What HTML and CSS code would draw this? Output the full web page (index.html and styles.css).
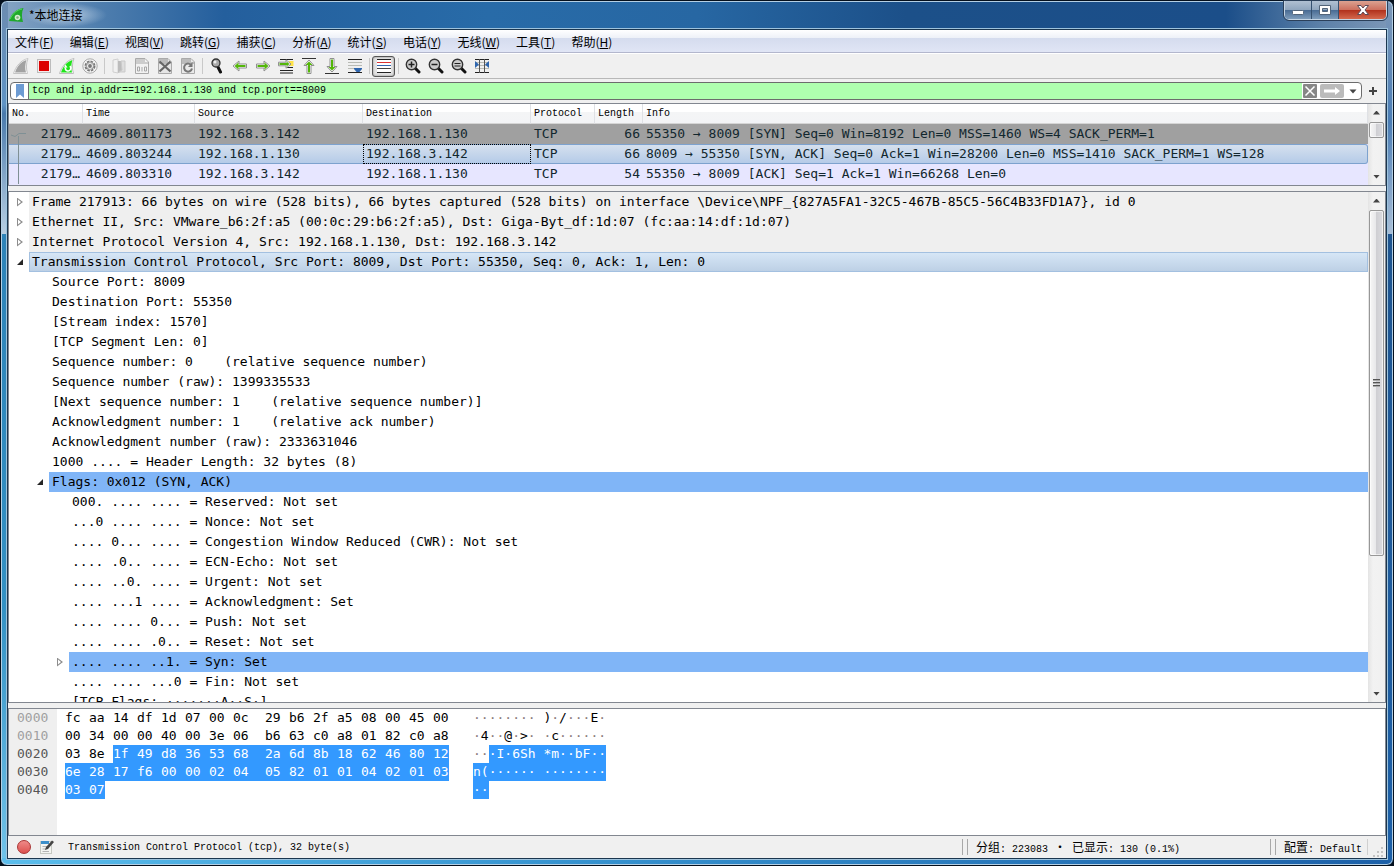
FILE: index.html
```html
<!DOCTYPE html>
<html lang="zh-CN">
<head>
<meta charset="utf-8">
<title>*本地连接</title>
<link rel="stylesheet" href="styles.css">
</head>
<body>
<div class="window">
  <header class="titlebar">
    <svg class="app-icon" width="16" height="16" viewBox="0 0 16 16"><path d="M1 14C3 7 8 2 15.500 1 13.500 5 13.500 10 15 15L1 14Z" fill="#1fa82c"/><path d="M2 12C5 6 9 3 14 2" stroke="#58d862" fill="none"/><circle cx="9.500" cy="10.500" r="2.800" fill="#d5ecd0"/><circle cx="9.500" cy="10.500" r="1.200" fill="#7fae7c"/></svg>
    <h1 class="title">*本地连接</h1>
    <div class="window-buttons">
      <button class="wbtn" aria-label="最小化"><svg width="14" height="12" viewBox="0 0 14 12"><rect x="1.500" y="6.500" width="11" height="4" rx="1" fill="#fff" stroke="#53657a"/></svg></button>
      <button class="wbtn" aria-label="最大化"><svg width="14" height="12" viewBox="0 0 14 12"><path d="M1.500 1.500H12.500V10.500H1.500ZM4.500 4.500V7.500H9.500V4.500Z" fill="#fff" fill-rule="evenodd" stroke="#53657a"/></svg></button>
      <button class="wbtn close" aria-label="关闭"><svg width="14" height="12" viewBox="0 0 14 12"><path d="M1.500 1.500H5L7 4 9 1.500H12.500L9 6 12.500 10.500H9L7 8 5 10.500H1.500L5 6Z" fill="#fff" stroke="#5c4a56"/></svg></button>
    </div>
  </header>
  <main class="client">
    <nav class="menubar">
      <button>文件(<u>F</u>)</button><button>编辑(<u>E</u>)</button><button>视图(<u>V</u>)</button><button>跳转(<u>G</u>)</button><button>捕获(<u>C</u>)</button><button>分析(<u>A</u>)</button><button>统计(<u>S</u>)</button><button>电话(<u>Y</u>)</button><button>无线(<u>W</u>)</button><button>工具(<u>T</u>)</button><button>帮助(<u>H</u>)</button>
    </nav>
    <div class="toolbar">
      <button aria-label="开始捕获"><svg width="16" height="16" viewBox="0 0 16 16"><path d="M.5 15.500C3 8 8 2 15 .5 13 5 13 11 14.500 15.500Z" fill="#fff" stroke="#c4c4c4"/><path d="M2 14.500C4 8.500 8 3.500 13.500 2 12 6 12 11 13 14.500Z" fill="#a2a2a2"/></svg></button>
      <button aria-label="停止捕获"><svg width="16" height="16" viewBox="0 0 16 16"><rect x="1.500" y="1.500" width="13" height="13" fill="#f7eaea" stroke="#bcbcbc"/><rect x="3" y="3" width="10" height="10" fill="#dc0000"/></svg></button>
      <button aria-label="重新开始捕获"><svg width="16" height="16" viewBox="0 0 16 16"><path d="M.5 15.500C3 8 8 2 15 .5 13 5 13 11 14.500 15.500Z" fill="#fff" stroke="#bdbdbd"/><path d="M2 14.500C4 8.500 8 3.500 13.500 2 12 6 12 11 13 14.500Z" fill="#20e31b"/><path d="M10.800 8.200A2.700 2.700 0 1 1 6.500 9.500" stroke="#fff" stroke-width="1.500" fill="none"/><path d="M5 9.800 6.500 6.500 8.500 9.500Z" fill="#fff"/></svg></button>
      <button aria-label="捕获选项"><svg width="16" height="16" viewBox="0 0 16 16"><circle cx="8" cy="8" r="7.200" fill="#f7f7f7" stroke="#aaa"/><circle cx="8" cy="8" r="4.600" fill="none" stroke="#777" stroke-width="1.800" stroke-dasharray="2.600 1"/><circle cx="8" cy="8" r="3.600" fill="#777"/><circle cx="8" cy="8" r="3" fill="#eee"/><circle cx="8" cy="8" r="1.900" fill="#777"/></svg></button>
      <span class="sep"></span>
      <button aria-label="打开"><svg width="16" height="16" viewBox="0 0 16 16"><path d="M2 2 7 1V15L2 14Z" fill="#f1f1f1" stroke="#d0d0d0"/><path d="M7 3H11V13L7 15Z" fill="#bcbcbc"/><path d="M10 3H14V14H8L11 12Z" fill="#dedede" stroke="#c9c9c9"/></svg></button>
      <button aria-label="保存"><svg width="16" height="16" viewBox="0 0 16 16"><path d="M1.500.5H11L14.500 4V15.500H1.500Z" fill="#f2f2f2" stroke="#aaa"/><path d="M2 1H11V4H14V6H2Z" fill="#ccc"/><path d="M3.500 9H5.500V13H3.500ZM8 9V13.500M10.500 9H12.500V13H10.500Z" fill="none" stroke="#a7a7a7"/></svg></button>
      <button aria-label="关闭文件"><svg width="16" height="16" viewBox="0 0 16 16"><path d="M1.500.5H11L14.500 4V15.500H1.500Z" fill="#e5e5e5" stroke="#aaa"/><path d="M2 1H11V4H14V6H2Z" fill="#bbb"/><path d="M2.500 3.500 13.500 13.500M13.500 3.500 2.500 13.500" stroke="#666" stroke-width="2.200"/></svg></button>
      <button aria-label="重新加载"><svg width="16" height="16" viewBox="0 0 16 16"><path d="M1.500.5H11L14.500 4V15.500H1.500Z" fill="#e9e9e9" stroke="#aaa"/><path d="M2 1H11V4H14V6H2Z" fill="#bbb"/><path d="M11.500 7.500A4 4 0 1 0 12 10.500" fill="none" stroke="#777" stroke-width="2"/><path d="M12.500 4V9H8Z" fill="#777"/></svg></button>
      <span class="sep"></span>
      <button aria-label="查找"><svg width="16" height="16" viewBox="0 0 16 16"><path d="M9 9 11.500 14" stroke="#111" stroke-width="3" stroke-linecap="round"/><circle cx="7" cy="5" r="4" fill="#aaa" stroke="#333" stroke-width="1.300"/><circle cx="6" cy="4" r="1.500" fill="#eee"/></svg></button>
      <button aria-label="后退"><svg width="16" height="16" viewBox="0 0 16 16"><path d="M1 8 7 3V6H14.500V10H7V13Z" fill="#fff" stroke="#909090"/><path d="M2.500 8 6.500 4.500V7H13.500V9H6.500V11.500Z" fill="#54b60a"/></svg></button>
      <button aria-label="前进"><svg width="16" height="16" viewBox="0 0 16 16"><path d="M15 8 9 3V6H1.500V10H9V13Z" fill="#fff" stroke="#909090"/><path d="M13.500 8 9.500 4.500V7H2.500V9H9.500V11.500Z" fill="#54b60a"/></svg></button>
      <button aria-label="跳转到分组"><svg width="16" height="16" viewBox="0 0 16 16"><path d="M2 1.500H15M2 12.500H15M2 15H15M8 9.500H15" stroke="#222"/><rect x="11" y="3" width="4.500" height="5" fill="#ffe346"/><path d="M13 6 8 1.800V4.200H.5V7.800H8V10.200Z" fill="#fff" stroke="#909090"/><path d="M11.500 6 8.500 3.500V5H1.500V7H8.500V8.500Z" fill="#54b60a"/></svg></button>
      <button aria-label="首个分组"><svg width="16" height="16" viewBox="0 0 16 16"><path d="M1 .5H15" stroke="#333"/><path d="M8 2 13 7.500H10V15.500H6V7.500H3Z" fill="#fff" stroke="#909090"/><path d="M8 3.500 11.500 7H9V14.500H7V7H4.500Z" fill="#54b60a"/></svg></button>
      <button aria-label="末个分组"><svg width="16" height="16" viewBox="0 0 16 16"><path d="M1 15.500H15" stroke="#333"/><path d="M8 14 13 8.500H10V.5H6V8.500H3Z" fill="#fff" stroke="#909090"/><path d="M8 12.500 11.500 9H9V1.500H7V9H4.500Z" fill="#54b60a"/></svg></button>
      <button aria-label="自动滚动"><svg width="16" height="16" viewBox="0 0 16 16"><path d="M1 1.500H15M1 14.500H15" stroke="#222"/><path d="M1 4.500H15M1 7.500H15M1 10.500H15" stroke="#b9bbb5"/><path d="M7 10H15V11L12.500 14H9.500L7 11Z" fill="#2f66ae"/></svg></button>
      <span class="sep"></span>
      <button class="pressed" aria-label="着色分组列表" aria-pressed="true"><svg width="16" height="16" viewBox="0 0 16 16"><rect x="1" y="1" width="14" height="14" fill="#fff"/><path d="M1 1.500H15M1 14.500H15" stroke="#222"/><path d="M1 4.500H15" stroke="#d33"/><path d="M1 7.500H15" stroke="#3366b0"/><path d="M1 10.500H15" stroke="#444"/></svg></button>
      <span class="sep"></span>
      <button aria-label="放大"><svg width="16" height="16" viewBox="0 0 16 16"><path d="M10 10 14 14" stroke="#111" stroke-width="3" stroke-linecap="round"/><circle cx="6.500" cy="6.500" r="5.200" fill="#ccc" stroke="#333" stroke-width="1.400"/><path d="M3.500 6.500H9.500M6.500 3.500V9.500" stroke="#222" stroke-width="1.500"/></svg></button>
      <button aria-label="缩小"><svg width="16" height="16" viewBox="0 0 16 16"><path d="M10 10 14 14" stroke="#111" stroke-width="3" stroke-linecap="round"/><circle cx="6.500" cy="6.500" r="5.200" fill="#ccc" stroke="#333" stroke-width="1.400"/><path d="M3.500 6.500H9.500" stroke="#222" stroke-width="1.500"/></svg></button>
      <button aria-label="正常大小"><svg width="16" height="16" viewBox="0 0 16 16"><path d="M10 10 14 14" stroke="#111" stroke-width="3" stroke-linecap="round"/><circle cx="6.500" cy="6.500" r="5.200" fill="#ccc" stroke="#333" stroke-width="1.400"/><path d="M3.500 5.500H9.500M3.500 8H9.500" stroke="#222" stroke-width="1.200"/></svg></button>
      <button aria-label="调整列宽"><svg width="16" height="16" viewBox="0 0 16 16"><path d="M1 1.500H15M1 14.500H15" stroke="#222"/><path d="M1 4.500H15M1 7.500H15M1 10.500H15" stroke="#b9bbb5"/><path d="M5.500 1V15M10.500 1V15" stroke="#555"/><path d="M1 3 5 6.500 1 10ZM15 3 11 6.500 15 10Z" fill="#2f66ae"/></svg></button>
    </div>
    <form class="filterbar">
      <div class="filter">
        <button type="button" class="bookmark" aria-label="书签"><svg width="10" height="14" viewBox="0 0 10 14"><path d="M1 0H9V14L5 10.500 1 14Z" fill="#6d9bd2"/></svg></button>
        <input aria-label="显示过滤器" spellcheck="false" value="tcp and ip.addr==192.168.1.130 and tcp.port==8009">
        <button type="button" class="clear" aria-label="清除"><svg width="14" height="14" viewBox="0 0 14 14"><rect width="14" height="14" rx="1" fill="#878787"/><path d="M2.500 2.500 11.500 11.500M11.500 2.500 2.500 11.500" stroke="#fff" stroke-width="1.500"/></svg></button>
        <button type="button" class="apply" aria-label="应用"><svg width="24" height="14" viewBox="0 0 24 14"><rect width="24" height="14" rx="2" fill="#bbb"/><path d="M4 5.500H15V3L20 7 15 11V8.500H4Z" fill="#fff"/></svg></button>
        <button type="button" class="drop" aria-label="历史"><svg width="8" height="5" viewBox="0 0 8 5"><path d="M.5.500H7.500L4 4.500Z" fill="#444"/></svg></button>
      </div>
      <button type="button" class="add" aria-label="添加过滤器按钮"><svg width="8" height="8" viewBox="0 0 8 8"><path d="M4 0V8M0 4H8" stroke="#444" stroke-width="2"/></svg></button>
    </form>
    <section class="pane packets">
      <div class="packet-scroll">
        <svg class="relation" width="20" height="60" viewBox="0 0 20 60"><path d="M2 11 6 12.500 10 9.500H17M9.500 12V60" fill="none" stroke="#7f9095"/></svg>
        <table class="packet-table">
          <colgroup><col class="c-no"><col class="c-time"><col class="c-addr"><col class="c-addr"><col class="c-proto"><col class="c-len"><col></colgroup>
          <thead><tr><th>No.</th><th>Time</th><th>Source</th><th>Destination</th><th>Protocol</th><th>Length</th><th>Info</th></tr></thead>
          <tbody>
            <tr class="syn"><td>2179…</td><td>4609.801173</td><td>192.168.3.142</td><td>192.168.1.130</td><td>TCP</td><td>66</td><td>55350 → 8009 [SYN] Seq=0 Win=8192 Len=0 MSS=1460 WS=4 SACK_PERM=1</td></tr>
            <tr class="current"><td>2179…</td><td>4609.803244</td><td>192.168.1.130</td><td class="focus">192.168.3.142</td><td>TCP</td><td>66</td><td>8009 → 55350 [SYN, ACK] Seq=0 Ack=1 Win=28200 Len=0 MSS=1410 SACK_PERM=1 WS=128</td></tr>
            <tr><td>2179…</td><td>4609.803310</td><td>192.168.3.142</td><td>192.168.1.130</td><td>TCP</td><td>54</td><td>55350 → 8009 [ACK] Seq=1 Ack=1 Win=66268 Len=0</td></tr>
          </tbody>
        </table>
      </div>
      <div class="scrollbar">
        <button class="up" aria-label="向上"></button><div class="track"><div class="thumb small"></div></div><button class="down" aria-label="向下"></button>
      </div>
    </section>
    <section class="pane details">
      <ul class="tree">
        <li><div class="row shade"><button class="toggle" aria-label="展开"></button><span>Frame 217913: 66 bytes on wire (528 bits), 66 bytes captured (528 bits) on interface \Device\NPF_{827A5FA1-32C5-467B-85C5-56C4B33FD1A7}, id 0</span></div></li>
        <li><div class="row shade"><button class="toggle" aria-label="展开"></button><span>Ethernet II, Src: VMware_b6:2f:a5 (00:0c:29:b6:2f:a5), Dst: Giga-Byt_df:1d:07 (fc:aa:14:df:1d:07)</span></div></li>
        <li><div class="row shade"><button class="toggle" aria-label="展开"></button><span>Internet Protocol Version 4, Src: 192.168.1.130, Dst: 192.168.3.142</span></div></li>
        <li><div class="row selected"><button class="toggle open" aria-label="折叠"></button><span>Transmission Control Protocol, Src Port: 8009, Dst Port: 55350, Seq: 0, Ack: 1, Len: 0</span></div>
          <ul>
            <li><div class="row leaf"><span>Source Port: 8009</span></div></li>
            <li><div class="row leaf"><span>Destination Port: 55350</span></div></li>
            <li><div class="row leaf"><span>[Stream index: 1570]</span></div></li>
            <li><div class="row leaf"><span>[TCP Segment Len: 0]</span></div></li>
            <li><div class="row leaf"><span>Sequence number: 0    (relative sequence number)</span></div></li>
            <li><div class="row leaf"><span>Sequence number (raw): 1399335533</span></div></li>
            <li><div class="row leaf"><span>[Next sequence number: 1    (relative sequence number)]</span></div></li>
            <li><div class="row leaf"><span>Acknowledgment number: 1    (relative ack number)</span></div></li>
            <li><div class="row leaf"><span>Acknowledgment number (raw): 2333631046</span></div></li>
            <li><div class="row leaf"><span>1000 .... = Header Length: 32 bytes (8)</span></div></li>
            <li><div class="row chat"><button class="toggle open" aria-label="折叠"></button><span>Flags: 0x012 (SYN, ACK)</span></div>
              <ul>
                <li><div class="row leaf"><span>000. .... .... = Reserved: Not set</span></div></li>
                <li><div class="row leaf"><span>...0 .... .... = Nonce: Not set</span></div></li>
                <li><div class="row leaf"><span>.... 0... .... = Congestion Window Reduced (CWR): Not set</span></div></li>
                <li><div class="row leaf"><span>.... .0.. .... = ECN-Echo: Not set</span></div></li>
                <li><div class="row leaf"><span>.... ..0. .... = Urgent: Not set</span></div></li>
                <li><div class="row leaf"><span>.... ...1 .... = Acknowledgment: Set</span></div></li>
                <li><div class="row leaf"><span>.... .... 0... = Push: Not set</span></div></li>
                <li><div class="row leaf"><span>.... .... .0.. = Reset: Not set</span></div></li>
                <li><div class="row chat"><button class="toggle" aria-label="展开"></button><span>.... .... ..1. = Syn: Set</span></div></li>
                <li><div class="row leaf"><span>.... .... ...0 = Fin: Not set</span></div></li>
                <li><div class="row leaf"><span>[TCP Flags: ·······A··S·]</span></div></li>
              </ul>
            </li>
          </ul>
        </li>
      </ul>
      <div class="scrollbar">
        <button class="up" aria-label="向上"></button><div class="track"><div class="thumb large"><i class="grip"></i></div></div><button class="down" aria-label="向下"></button>
      </div>
    </section>
    <section class="pane hex">
      <pre class="offsets"><span class="dim">0000
0010</span>
0020
0030
0040</pre>
      <table class="bytes">
        <colgroup><col span="7"><col class="half"><col span="8"></colgroup>
        <tbody>
          <tr><td>fc</td><td>aa</td><td>14</td><td>df</td><td>1d</td><td>07</td><td>00</td><td>0c</td><td>29</td><td>b6</td><td>2f</td><td>a5</td><td>08</td><td>00</td><td>45</td><td>00</td></tr>
          <tr><td>00</td><td>34</td><td>00</td><td>00</td><td>40</td><td>00</td><td>3e</td><td>06</td><td>b6</td><td>63</td><td>c0</td><td>a8</td><td>01</td><td>82</td><td>c0</td><td>a8</td></tr>
          <tr><td>03</td><td>8e</td><td class="on">1f</td><td class="on">49</td><td class="on">d8</td><td class="on">36</td><td class="on">53</td><td class="on">68</td><td class="on">2a</td><td class="on">6d</td><td class="on">8b</td><td class="on">18</td><td class="on">62</td><td class="on">46</td><td class="on">80</td><td class="on last">12</td></tr>
          <tr><td class="on">6e</td><td class="on">28</td><td class="on">17</td><td class="on">f6</td><td class="on">00</td><td class="on">00</td><td class="on">02</td><td class="on">04</td><td class="on">05</td><td class="on">82</td><td class="on">01</td><td class="on">01</td><td class="on">04</td><td class="on">02</td><td class="on">01</td><td class="on last">03</td></tr>
          <tr><td class="on">03</td><td class="on last">07</td></tr>
        </tbody>
      </table>
      <pre class="ascii"><i>········</i> )<i>·</i>/<i>···</i>E<i>·</i>
<i>·</i>4<i>··</i>@<i>·</i>&gt;<i>·</i> <i>·</i>c<i>······</i>
<i>··</i><mark>·I·6Sh *m··bF··</mark>
<mark>n(······ ········</mark>
<mark>··</mark></pre>
    </section>
    <footer class="statusbar">
      <button class="expert" aria-label="专家信息"></button>
      <button class="comment" aria-label="注释"><svg width="14" height="14" viewBox="0 0 14 14"><rect x=".5" y="1.500" width="11" height="12" fill="#f4f5f2" stroke="#c5c8c2"/><path d="M1 1H9V4H1Z" fill="#3c8fca"/><path d="M2.500 6.500H7M2.500 9H6M2.500 11.500H9" stroke="#b5b5b5"/><path d="M5 10 6 7 12 .5 14 2 8 9Z" fill="#444"/></svg></button>
      <span class="status-main">Transmission Control Protocol (tcp), 32 byte(s)</span>
      <span class="status-cell counts"><b>分组</b>: 223083 <b class="dot">·</b> <b>已显示</b>: 130 (0.1%)</span>
      <span class="status-cell profile"><b>配置</b>: Default</span>
      <svg class="sizegrip" width="12" height="12" viewBox="0 0 12 12"><path d="M9 1h2v2H9zM9 5h2v2H9zM9 9h2v2H9zM5 5h2v2H5zM5 9h2v2H5zM1 9h2v2H1z" fill="#c3c3c3"/></svg>
    </footer>
  </main>
</div>
</body>
</html>
```
FILE: styles.css
```css
* { box-sizing: border-box; }
html, body { height: 100%; }
body {
  margin: 0;
  background: #05101d;
  color: #000;
  font: 12px/16px "Noto Sans CJK SC", sans-serif;
  overflow: hidden;
}
button { margin: 0; padding: 0; border: 0; background: none; font: inherit; color: inherit; }
svg { display: block; }
ul { margin: 0; padding: 0; list-style: none; }

/* Window frame */
.window {
  height: 100vh;
  display: flex;
  flex-direction: column;
  padding: 0 6px 6px;
  border: 1px solid #05101d;
  border-radius: 7px;
  box-shadow: inset 0 0 0 1px #b4cfe4;
  background:
    linear-gradient(90deg, #5bbdeb, #3794d0 40%, #1c60a8) bottom / 100% 7px no-repeat,
    linear-gradient(#6c8cb0, #5f93c4 12%, #4a7aac 13%, #b0c9df 26%, #b8cde0 27%, #2e83b8 27%, #3391c4 70%, #71c3ea) left / 7px 100% no-repeat,
    linear-gradient(#7d98b8, #4b7db5 14%, #a9bed6 27%, #1f5590 27%, #1c60a8) right / 7px 100% no-repeat,
    linear-gradient(90deg, #87a5c4, #4f7eae 7%, #245f9d 16%, #286ba8 35%, #2767a3 50%, #1c5089 65%, #1b4e89 88%, #5e82a9 95%, #7d98b8);
}
.titlebar { display: flex; height: 28px; flex: none; align-items: center; padding-left: 1px; }
.title {
  margin: 0 0 0 1px;
  padding: 0 24px 0 4px;
  font-size: 12px;
  font-weight: 400;
  line-height: 24px;
  background: radial-gradient(closest-side, #d9e7f4c0, #d9e7f400);
}
.window-buttons {
  margin-left: auto;
  align-self: flex-start;
  display: flex;
  border: 1px solid #c5d5e4;
  border-top: 0;
  border-radius: 0 0 5px 5px;
  overflow: hidden;
  outline: 1px solid #2b405a;
}
.wbtn {
  width: 27px;
  height: 18px;
  display: grid;
  place-items: center;
  border-right: 1px solid #35506f;
  background: linear-gradient(#b0c0d2, #8fa5bd 50%, #476a92 50%, #7e9cbb);
}
.wbtn.close { width: 47px; border: 0; background: linear-gradient(#dba291, #cc6f5d 50%, #b02f1b 50%, #d4694e); }
.client {
  flex: 1;
  min-height: 0;
  display: flex;
  flex-direction: column;
  border: 1px solid #1b364f;
  box-shadow: 0 0 0 1px #9ec3dd;
  background: #f0f0f0;
}

/* Menu and toolbars */
.menubar {
  display: flex;
  gap: 16px;
  height: 24px;
  flex: none;
  padding: 0 7px;
  border-bottom: 1px solid #fff;
  box-shadow: inset 0 -1px #b3b7cd;
  background: linear-gradient(#fff, #eef1f8 34%, #d5dcee 36%, #e1e6f6);
}
.toolbar { display: flex; align-items: center; height: 25px; flex: none; padding: 0 1px; border-bottom: 1px solid #b8b8b8; }
.toolbar button { width: 23px; height: 21px; display: grid; place-items: center; }
.toolbar .pressed { border: 1px solid #555; border-radius: 3px; background: #e2e2e2; box-shadow: inset 0 0 2px #777; }
.sep { width: 6px; height: 16px; background: linear-gradient(#c9c9c9, #c9c9c9) center / 1px 100% no-repeat; }
.filterbar { display: flex; height: 24px; flex: none; padding: 3px 2px; }
.filter {
  flex: 1;
  display: flex;
  align-items: center;
  height: 18px;
  border: 1px solid #6c6c6c;
  border-radius: 4px;
  background: #fff;
  overflow: hidden;
}
.bookmark { width: 17px; display: grid; place-items: center; }
.filter input {
  flex: 1;
  min-width: 0;
  height: 16px;
  padding: 0 3px;
  border: 0;
  border-left: 1px solid #6c6c6c;
  outline: 0;
  border-radius: 0;
  background: #afffaf;
  color: #000;
  font: 10px/16px "Liberation Mono", monospace;
}
.clear { margin: 0 3px 0 1px; }
.drop { width: 17px; display: grid; place-items: center; }
.add { width: 22px; display: grid; place-items: center; }

/* Panes */
.pane { display: flex; border: 1px solid #828790; background: #fff; font: 13px/20px "DejaVu Sans Mono", monospace; }
table { border-collapse: separate; border-spacing: 0; table-layout: fixed; }
.packets { flex: none; margin-bottom: 5px; background: #e7e6ff; }
.packet-scroll { flex: 1; min-width: 0; position: relative; padding-bottom: 1px; }
.relation { position: absolute; left: 0; top: 20px; z-index: 1; }
.packet-table { width: 100%; color: #12272e; }
.c-no { width: 74px; }
.c-time { width: 112px; }
.c-addr { width: 168px; }
.c-proto { width: 64px; }
.c-len { width: 48px; }
.packet-table th {
  height: 20px;
  padding: 0 3px;
  border-right: 1px solid #dfe1e5;
  border-bottom: 1px solid #d5d5d5;
  background: linear-gradient(#fff 40%, #f4f5f6 42%, #f3f4f6);
  color: #000;
  text-align: left;
  font: 10px/19px "Liberation Mono", monospace;
}
.packet-table td { height: 20px; padding: 0 3px; line-height: 18px; white-space: nowrap; overflow: hidden; border: 1px solid transparent; border-width: 1px 0; }
.packet-table td:first-child, .packet-table td:nth-child(6) { text-align: right; padding-left: 0; }
.syn td { background: #a0a0a0; }
.current td { border-color: #7da2ce; background: linear-gradient(#d5e0ee, #b5cbe8); }
.current td:last-child { border-right: 1px solid #7da2ce; border-radius: 0 3px 3px 0; }
.current .focus { outline: 1px dotted #000; outline-offset: -1px; }

.details { flex: 1; min-height: 0; margin-bottom: 5px; }
.tree { flex: 1; min-width: 0; overflow: hidden; }
.tree ul { padding-left: 20px; }
.row { display: flex; height: 20px; white-space: pre; }
.row span { flex: 1; min-width: 0; padding-left: 3px; overflow: hidden; }
.leaf { padding-left: 20px; }
.toggle { width: 20px; padding-left: 2px; display: grid; place-items: center; flex: none; }
.tree .toggle { padding-left: 2px; }
.toggle::before { content: ""; width: 6px; height: 9px; background: #8d8d8d; clip-path: polygon(0 0, 100% 50%, 0 100%, 0 0, 1px 2px, 1px 7px, 4px 50%, 1px 2px); }
.toggle.open::before { width: 6px; height: 6px; background: #262626; clip-path: polygon(100% 0, 100% 100%, 0 100%); }
.shade span { background: #efefef; }
.selected span { border: 1px solid #a3c0e0; padding-left: 2px; line-height: 18px; background: linear-gradient(#d6e6f6, #bdd0e5); }
.chat span { background: #80b5f7; }

.scrollbar { width: 17px; flex: none; display: flex; flex-direction: column; background: linear-gradient(90deg, #e4e4e4, #f2f2f2 30%, #f0f0f0); }
.scrollbar button { height: 17px; flex: none; display: grid; place-items: center; }
.scrollbar button::before { content: ""; width: 7px; height: 4px; background: #444; }
.up::before { clip-path: polygon(50% 0, 100% 100%, 0 100%); }
.down::before { clip-path: polygon(0 0, 100% 0, 50% 100%); }
.track { flex: 1; min-height: 0; padding: 1px; }
.thumb { border: 1px solid #979797; border-radius: 2px; background: linear-gradient(90deg, #f6f6f6, #e8e8ea 45%, #cfcfd3 50%, #dcdce0); box-shadow: inset 0 0 0 1px #fff9; display: grid; place-items: center; }
.thumb.small { height: 16px; }
.thumb.large { height: 73%; }
.grip { width: 7px; height: 8px; background: repeating-linear-gradient(#555 0 1px, #aaa 1px 2px, transparent 2px 3px); }

/* Byte view */
.hex { flex: none; align-items: flex-start; line-height: 18px; }
.hex pre { margin: 0; font: inherit; }
.hex .offsets { width: 48px; padding: 0 0 36px 8px; background: #efefef; color: #555; }
.offsets .dim { color: #a0a0a0; }
.bytes { width: 392px; margin: 0 16px 0 8px; }
.bytes col { width: 24px; }
.bytes .half { width: 32px; }
.bytes td { height: 18px; padding: 0; white-space: nowrap; }
.on { background: #3399ff; color: #fff; }
.on.last { background: linear-gradient(#3399ff, #3399ff) left / 16px 100% no-repeat; }
.ascii i { font-style: normal; color: #8c7d7d; }
mark { display: inline-block; height: 18px; background: #3399ff; color: #fff; vertical-align: top; }

/* Status bar */
.statusbar { display: flex; align-items: center; height: 22px; flex: none; padding: 0 2px 0 9px; font: 10px/16px "Liberation Mono", "Noto Sans CJK SC", monospace; white-space: pre; }
.statusbar b { font: 12px/16px "Noto Sans CJK SC", sans-serif; }
.statusbar .dot { display: inline-block; width: 12px; text-align: center; }
.expert { width: 14px; height: 14px; border: 1px solid #a33; border-radius: 50%; background: linear-gradient(#ef8a88, #dd5250); }
.comment { margin-left: 9px; }
.status-main { flex: 1; margin-left: 14px; padding-top: 2px; }
.status-cell { height: 16px; padding-left: 8px; border-left: 1px solid #a8a8a8; box-shadow: -4px 0 #f0f0f0, -5px 0 #a8a8a8; }
.counts { width: 308px; }
.profile { width: 93px; border-right: 1px solid #d0d0d0; }
.sizegrip { margin-left: 4px; align-self: flex-end; }
```
